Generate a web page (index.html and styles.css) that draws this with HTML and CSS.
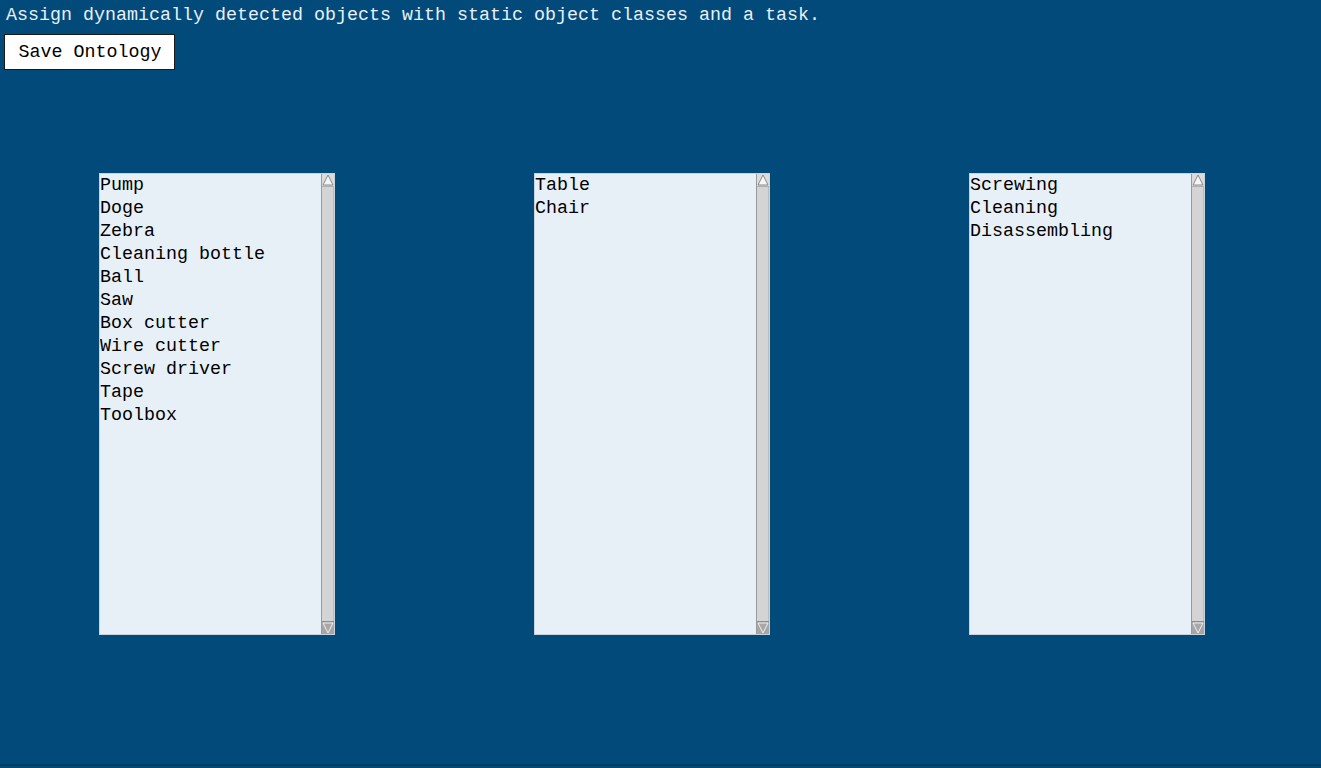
FILE: index.html
```html
<!DOCTYPE html>
<html>
<head>
<meta charset="utf-8">
<link rel="stylesheet" href="styles.css">
</head>
<body>
<div class="page">
  <p class="intro">Assign dynamically detected objects with static object classes and a task.</p>
  <button class="save">Save Ontology</button>
  <div class="lists">
    <div class="listbox">
      <div class="items">
        <div class="opt">Pump</div>
        <div class="opt">Doge</div>
        <div class="opt">Zebra</div>
        <div class="opt">Cleaning bottle</div>
        <div class="opt">Ball</div>
        <div class="opt">Saw</div>
        <div class="opt">Box cutter</div>
        <div class="opt">Wire cutter</div>
        <div class="opt">Screw driver</div>
        <div class="opt">Tape</div>
        <div class="opt">Toolbox</div>
      </div>
      <div class="sbar">
        <div class="sbtn up"><svg width="12" height="12" viewBox="0 0 12 12"><path d="M6 1 L11 11 L1 11 Z" fill="#f6f6f6" stroke="#8a8a8a" stroke-width="1"/></svg></div>
        <div class="strack"></div>
        <div class="sbtn down"><svg width="12" height="12" viewBox="0 0 12 12"><path d="M1 1 L11 1 L6 11 Z" fill="#a8a8a8" stroke="#eeeeee" stroke-width="1"/></svg></div>
      </div>
    </div>
    <div class="listbox">
      <div class="items">
        <div class="opt">Table</div>
        <div class="opt">Chair</div>
      </div>
      <div class="sbar">
        <div class="sbtn up"><svg width="12" height="12" viewBox="0 0 12 12"><path d="M6 1 L11 11 L1 11 Z" fill="#f6f6f6" stroke="#8a8a8a" stroke-width="1"/></svg></div>
        <div class="strack"></div>
        <div class="sbtn down"><svg width="12" height="12" viewBox="0 0 12 12"><path d="M1 1 L11 1 L6 11 Z" fill="#a8a8a8" stroke="#eeeeee" stroke-width="1"/></svg></div>
      </div>
    </div>
    <div class="listbox">
      <div class="items">
        <div class="opt">Screwing</div>
        <div class="opt">Cleaning</div>
        <div class="opt">Disassembling</div>
      </div>
      <div class="sbar">
        <div class="sbtn up"><svg width="12" height="12" viewBox="0 0 12 12"><path d="M6 1 L11 11 L1 11 Z" fill="#f6f6f6" stroke="#8a8a8a" stroke-width="1"/></svg></div>
        <div class="strack"></div>
        <div class="sbtn down"><svg width="12" height="12" viewBox="0 0 12 12"><path d="M1 1 L11 1 L6 11 Z" fill="#a8a8a8" stroke="#eeeeee" stroke-width="1"/></svg></div>
      </div>
    </div>
  </div>
</div>
</body>
</html>
```
FILE: styles.css
```css
html, body {
  margin: 0;
  padding: 0;
  background: #024a7a;
}
.page {
  height: 764px;
  border-bottom: 2px solid #013a62;
  font-family: "Liberation Mono", monospace;
  font-size: 18.33px;
  color: #e8f0f7;
  overflow: hidden;
}
.intro {
  margin: 0;
  padding: 5px 6px 0;
  line-height: 22px;
}
.save {
  display: block;
  margin: 7px 0 0 4px;
  height: 36px;
  width: 171px;
  padding: 0 0 0 1px;
  background: #ffffff;
  border: 1px solid #1a1a1a;
  border-radius: 0;
  font-family: "Liberation Mono", monospace;
  font-size: 18.33px;
  color: #000;
}
.lists {
  display: flex;
  gap: 199px;
  padding-left: 99px;
  margin-top: 103px;
}
.listbox {
  box-sizing: border-box;
  width: 236px;
  height: 462px;
  border: 1px solid #c9d3dc;
  background: #e8f0f7;
  color: #000;
  display: flex;
}
.items {
  flex: 1;
  overflow: hidden;
}
.opt {
  line-height: 23px;
  white-space: nowrap;
}
.sbar {
  width: 12px;
  display: flex;
  flex-direction: column;
  border-left: 1px solid #9a9a9a;
  background: #d4d4d4;
}
.sbtn {
  height: 12px;
  display: flex;
  align-items: center;
  justify-content: center;
}
.sbtn.up {
  background: #dcdcdc;
  border-bottom: 1px solid #b0b0b0;
}
.sbtn.down {
  background: #a6a6a6;
  border-top: 1px solid #8c8c8c;
}
.strack {
  flex: 1;
  background: #d4d4d4;
  border-right: 1px solid #bdbdbd;
}
```
